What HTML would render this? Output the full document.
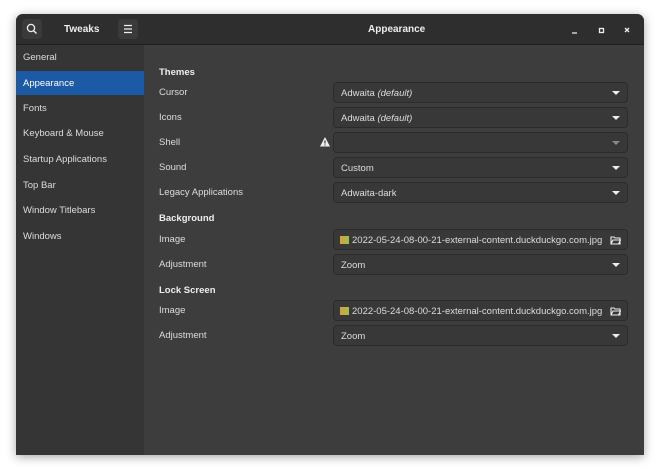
<!DOCTYPE html>
<html><head><style>
*{margin:0;padding:0;box-sizing:border-box}
body{width:660px;height:473px;background:#fff;font-family:"Liberation Sans",sans-serif;font-size:10px;color:#ddd;position:relative;overflow:hidden}
.win{position:absolute;left:16px;top:14px;width:628px;height:441px;background:#3d3d3d;border-radius:7px 7px 0 0;overflow:hidden;box-shadow:0 2px 10px rgba(0,0,0,.35)}
.hdr{position:absolute;left:0;top:0;width:628px;height:31px;background:#2e2e2e;border-bottom:1px solid #1f1f1f}
.side{position:absolute;left:0;top:31px;width:128px;height:410px;background:#353535}
.si{position:absolute;left:7px;font-size:9.5px;color:#ddd}
.sel{position:absolute;left:0;top:26px;width:128px;height:24px;background:#1c5aa6}
.lbl{position:absolute;left:143px;font-size:9.5px;color:#ddd}
.h{font-weight:bold;color:#eee}
.cb{position:absolute;left:317px;width:295px;height:21px;background:#383838;border:1px solid #2b2b2b;border-radius:4px;font-size:9.5px;padding:5px 7px;color:#ddd}
.cb i{font-style:italic}
.arr{position:absolute;right:7px;top:8px;width:0;height:0;border-left:4px solid transparent;border-right:4px solid transparent;border-top:4px solid #eee}
.btn{position:absolute;top:5px;width:20px;height:20px;border-radius:4px;background:#3a3a3a}
</style></head><body>
<div class="win">
<div class="hdr">
 <div class="btn" style="left:6px"><svg width="20" height="20"><circle cx="9" cy="9" r="3.6" stroke="#eee" stroke-width="1.3" fill="none"/><path d="M11.6 11.6L14.5 14.5" stroke="#eee" stroke-width="1.4"/></svg></div>
 <div style="position:absolute;left:48px;top:10px;font-weight:bold;font-size:10px;color:#eee">Tweaks</div>
 <div class="btn" style="left:102px"><svg width="20" height="20"><path d="M6 6.5h8M6 10h8M6 13.5h8" stroke="#eee" stroke-width="1.2"/></svg></div>
 <div style="position:absolute;left:352px;top:10px;font-weight:bold;font-size:10px;color:#eee">Appearance</div>
 <svg style="position:absolute;left:552px;top:9px" width="70" height="14"><path d="M4 10h5" stroke="#eee" stroke-width="1.3"/><rect x="31.5" y="5.5" width="4" height="4" stroke="#eee" fill="none" stroke-width="1.3"/><path d="M57 5l4 4M61 5l-4 4" stroke="#eee" stroke-width="1.3"/></svg>
</div>
<div class="side">
 <div class="sel"></div>
 <div class="si" style="top:7px">General</div>
 <div class="si" style="top:33px;color:#fff">Appearance</div>
 <div class="si" style="top:58px">Fonts</div>
 <div class="si" style="top:83px">Keyboard &amp; Mouse</div>
 <div class="si" style="top:109px">Startup Applications</div>
 <div class="si" style="top:135px">Top Bar</div>
 <div class="si" style="top:160px">Window Titlebars</div>
 <div class="si" style="top:186px">Windows</div>
</div>
<div class="lbl h" style="top:53px">Themes</div>
<div class="lbl" style="top:73px">Cursor</div>
<div class="lbl" style="top:98px">Icons</div>
<div class="lbl" style="top:123px">Shell</div>
<div class="lbl" style="top:148px">Sound</div>
<div class="lbl" style="top:173px">Legacy Applications</div>
<div class="lbl h" style="top:199px">Background</div>
<div class="lbl" style="top:220px">Image</div>
<div class="lbl" style="top:245px">Adjustment</div>
<div class="lbl h" style="top:271px">Lock Screen</div>
<div class="lbl" style="top:291px">Image</div>
<div class="lbl" style="top:316px">Adjustment</div>
<svg style="position:absolute;left:303px;top:122px" width="12" height="12"><path d="M6 1L11 10.5H1Z" fill="#eee"/><path d="M6 4.5v3M6 8.5v1" stroke="#333" stroke-width="1.2"/></svg>
<div class="cb" style="top:68px">Adwaita <i>(default)</i><div class="arr"></div></div>
<div class="cb" style="top:93px">Adwaita <i>(default)</i><div class="arr"></div></div>
<div class="cb" style="top:118px"><div class="arr" style="border-top-color:#888"></div></div>
<div class="cb" style="top:143px">Custom<div class="arr"></div></div>
<div class="cb" style="top:168px">Adwaita-dark<div class="arr"></div></div>
<div class="cb" style="top:215px;padding-left:6px"><span style="display:inline-block;width:9px;height:8px;background:linear-gradient(90deg,#d8a030,#9bc060);margin-right:3px;vertical-align:-1px"></span>2022-05-24-08-00-21-external-content.duckduckgo.com.jpg<svg style="position:absolute;right:6px;top:5px" width="11" height="10"><path d="M1 2h3l1 1h5v6H1Z M1 9l2-4h7.5l-2 4" stroke="#eee" stroke-width="1.1" fill="none"/></svg></div>
<div class="cb" style="top:240px">Zoom<div class="arr"></div></div>
<div class="cb" style="top:286px;padding-left:6px"><span style="display:inline-block;width:9px;height:8px;background:linear-gradient(90deg,#d8a030,#9bc060);margin-right:3px;vertical-align:-1px"></span>2022-05-24-08-00-21-external-content.duckduckgo.com.jpg<svg style="position:absolute;right:6px;top:5px" width="11" height="10"><path d="M1 2h3l1 1h5v6H1Z M1 9l2-4h7.5l-2 4" stroke="#eee" stroke-width="1.1" fill="none"/></svg></div>
<div class="cb" style="top:311px">Zoom<div class="arr"></div></div>
</div>
</body></html>
